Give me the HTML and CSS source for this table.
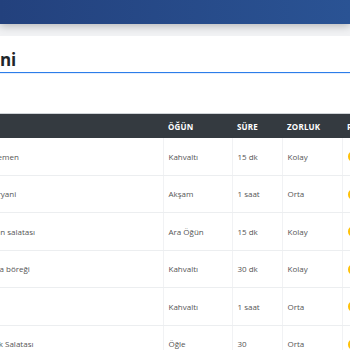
FILE: index.html
```html
<!DOCTYPE html>
<html lang="tr">
<head>
    <meta charset="UTF-8">
    <meta name="viewport" content="width=device-width, initial-scale=1.0">
    <title>Tariflerimizin Dizini</title>
    <link rel="stylesheet" href="styles.css">
</head>
<body>
    <header class="topbar"></header>

    <main class="content">
        <section class="card">
            <h1 class="card-title">Tariflerimizin Dizini</h1>

            <!-- Tarif tablosu -->
            <table class="recipes">
                <colgroup>
                    <col class="col-name">
                    <col class="col-meal">
                    <col class="col-time">
                    <col class="col-level">
                    <col class="col-score">
                </colgroup>
                <thead>
                    <tr>
                        <th>Ad</th>
                        <th>Öğün</th>
                        <th>Süre</th>
                        <th>Zorluk</th>
                        <th>Puan</th>
                    </tr>
                </thead>
                <tbody>
                    <tr>
                        <td>Menemen</td>
                        <td>Kahvaltı</td>
                        <td>15 dk</td>
                        <td>Kolay</td>
                        <td><span class="badge">★ 4.8</span></td>
                    </tr>
                    <tr>
                        <td>Et Biryani</td>
                        <td>Akşam</td>
                        <td>1 saat</td>
                        <td>Orta</td>
                        <td><span class="badge">★ 4.5</span></td>
                    </tr>
                    <tr>
                        <td>Çoban salatası</td>
                        <td>Ara Öğün</td>
                        <td>15 dk</td>
                        <td>Kolay</td>
                        <td><span class="badge">★ 4.2</span></td>
                    </tr>
                    <tr>
                        <td>Sigara böreği</td>
                        <td>Kahvaltı</td>
                        <td>30 dk</td>
                        <td>Kolay</td>
                        <td><span class="badge">★ 4.7</span></td>
                    </tr>
                    <tr>
                        <td>Pişi</td>
                        <td>Kahvaltı</td>
                        <td>1 saat</td>
                        <td>Orta</td>
                        <td><span class="badge">★ 4.4</span></td>
                    </tr>
                    <tr>
                        <td>Tavuk Salatası</td>
                        <td>Öğle</td>
                        <td>30</td>
                        <td>Orta</td>
                        <td><span class="badge">★ 4.1</span></td>
                    </tr>
                </tbody>
            </table>
        </section>
    </main>
</body>
</html>
```

FILE: styles.css
```css
body {
    margin: 0;
    font-family: 'Open Sans', 'Liberation Sans', sans-serif;
    background: #f1f2f4;
    overflow: hidden;
}

.topbar {
    height: 24px;
    background: linear-gradient(90deg, #23417d 0%, #2a5394 100%);
    box-shadow: 0 2px 8px rgba(0,0,0,0.25);
}

.content {
    margin: 12px 0 0 -24px;
    width: 640px;
}

.card {
    background: white;
    padding-top: 12px;
}

.card-title {
    margin: 0 0 0 -126px;
    font-size: 17px;
    font-weight: 700;
    line-height: 24px;
    color: #212529;
    border-bottom: 1px solid #2b7de9;
    box-shadow: 0 1px 0 #e4edfc;
}

.recipes {
    margin-top: 40px;
    width: 456px;
    border-collapse: collapse;
    table-layout: fixed;
    font-size: 8px;
}

.col-name { width: 187px; }
.col-meal { width: 69px; }
.col-time { width: 50px; }
.col-level { width: 60px; }
.col-score { width: 90px; }

.recipes th {
    height: 24px;
    padding: 0 5px;
    background: #343a40;
    color: white;
    text-align: left;
    font-weight: 700;
    text-transform: uppercase;
    letter-spacing: 0.2px;
    border-top: 1px solid #cfd3d7;
}

.recipes td {
    height: 36.5px;
    padding: 0 5px;
    color: #555;
    border-bottom: 1px solid #eceef0;
    border-right: 1px solid #f1f2f4;
}

.badge {
    display: inline-block;
    padding: 1px 5px;
    border-radius: 6px;
    background: #ffc107;
    color: #212529;
    font-size: 7px;
    font-weight: 600;
}
```
